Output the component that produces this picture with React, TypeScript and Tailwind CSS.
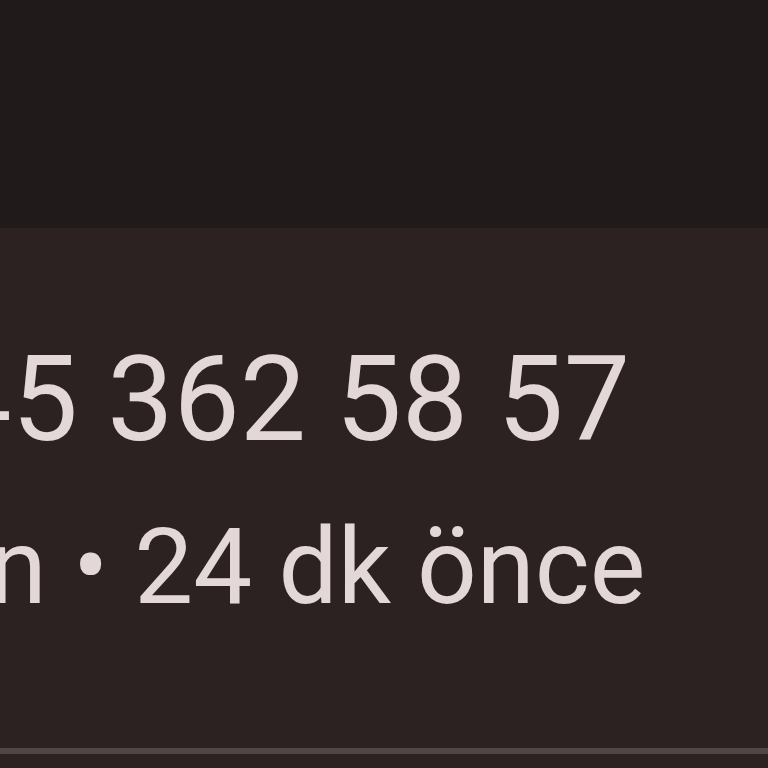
export default function App() {
  return (
    <div className="flex h-[768px] w-[768px] flex-col overflow-hidden bg-[#201b1a] font-['Roboto',sans-serif] text-[#e3d8d7]">
      <div className="h-[228px] shrink-0" />
      <div className="flex h-[520px] shrink-0 flex-col bg-[#2b2221] pt-[113px]">
        <div className="ml-[-121px] whitespace-nowrap text-[118px] leading-none">545 362 58 57</div>
        <div className="ml-[-302px] mt-[56px] whitespace-nowrap text-[105px] leading-none">Telefon • 24 dk önce</div>
      </div>
      <div className="h-[6px] shrink-0 bg-[#4f4646]" />
      <div className="flex-1 bg-[#2b2221]" />
    </div>
  );
}
